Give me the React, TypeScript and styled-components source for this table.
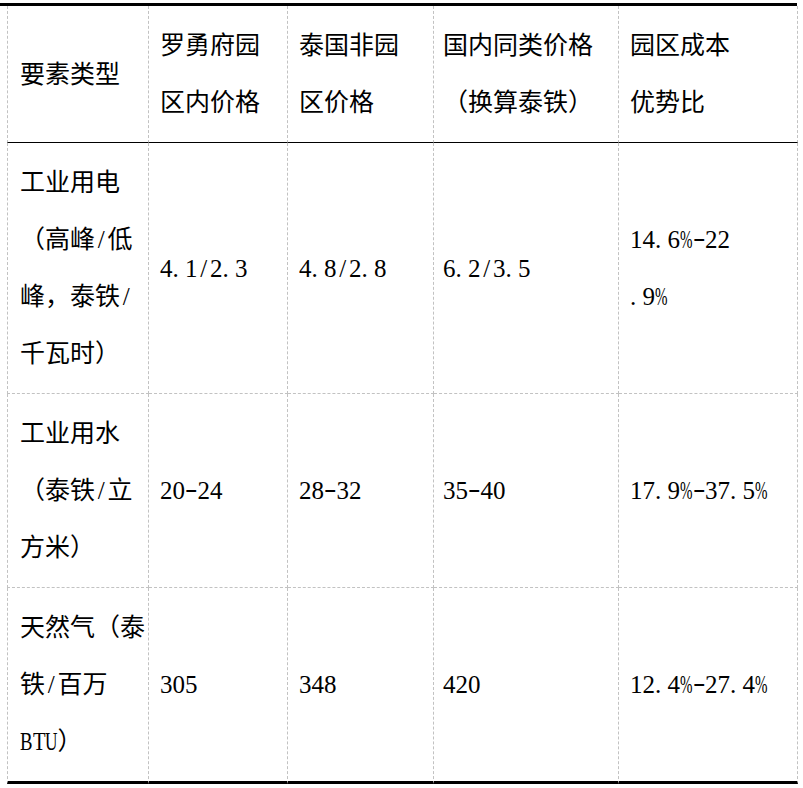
import React from "react";
import styled, { createGlobalStyle } from "styled-components";

const Global = createGlobalStyle`
  html, body { margin: 0; padding: 0; background: #fff; }
  body {
    font-family: "Liberation Serif", "Noto Sans CJK SC", serif;
    color: #000;
  }
`;

const Page = styled.div`
  padding-top: 3px;
  width: 803px;
`;

const TopRule = styled.div`
  width: 797px;
  height: 3px;
  background: #000;
`;

const Table = styled.table`
  margin-left: 7px;
  width: 791px;
  table-layout: fixed;
  border-collapse: separate;
  border-spacing: 0;
  font-family: "Liberation Serif", "Noto Sans CJK SC", serif;
  font-size: 25px;
  line-height: 57px;
  color: #000;
  text-spacing-trim: space-all;
  font-kerning: none;
`;

type Edge = "head" | "dash" | "end";

const Row = styled.tr<{ $edge: Edge }>`
  & > * {
    border-bottom: ${(p) =>
      p.$edge === "head"
        ? "1px solid #000"
        : p.$edge === "end"
        ? "3px solid #000"
        : "1px dashed #c2c2c2"};
  }
`;

const cellCss = `
  padding: 11px 8px 11px 11px;
  vertical-align: middle;
  text-align: left;
  font-weight: normal;
  border-right: 1px dashed #c2c2c2;
  &:first-child { border-left: 1px dashed #c2c2c2; padding-left: 12px; }
  &:nth-child(4) { padding-left: 9px; }
`;

const Head = styled.th`${cellCss}`;
const Cell = styled.td`${cellCss}`;

const Line = styled.span`
  display: block;
  white-space: nowrap;
`;

const Half = styled.span<{ $scale: number; $align: string; $lift: number }>`
  display: inline-block;
  width: 0.5em;
  white-space: nowrap;
  text-align: ${(p) => p.$align};
  transform: translateY(${(p) => -p.$lift}px) scaleX(${(p) => p.$scale});
  transform-origin: left center;
`;

const SCALE: Record<string, number> = { "%": 0.6, B: 0.75, T: 0.82, U: 0.69, "-": 1.5 };

function Txt({ s }: { s: string }) {
  const parts: React.ReactNode[] = [];
  let buf = "";
  Array.from(s).forEach((ch, i) => {
    if (/[.\/%\-A-Za-z]/.test(ch)) {
      if (buf) {
        parts.push(buf);
        buf = "";
      }
      const sc = SCALE[ch] ?? 1;
      parts.push(
        <Half
          key={i}
          $scale={sc}
          $align={ch === "/" ? "center" : "left"}
          $lift={ch === "-" ? 2 : 0}
        >
          {ch}
        </Half>
      );
    } else buf += ch;
  });
  if (buf) parts.push(buf);
  return <>{parts}</>;
}

const WIDTHS = [142, 139, 146, 185, 179];

const header: string[][] = [
  ["要素类型"],
  ["罗勇府园", "区内价格"],
  ["泰国非园", "区价格"],
  ["国内同类价格", "（换算泰铁）"],
  ["园区成本", "优势比"],
];

const rows: string[][][] = [
  [["工业用电", "（高峰/低", "峰，泰铁/", "千瓦时）"], ["4.1/2.3"], ["4.8/2.8"], ["6.2/3.5"], ["14.6%-22", ".9%"]],
  [["工业用水", "（泰铁/立", "方米）"], ["20-24"], ["28-32"], ["35-40"], ["17.9%-37.5%"]],
  [["天然气（泰", "铁/百万", "BTU）"], ["305"], ["348"], ["420"], ["12.4%-27.4%"]],
];

function Lines({ lines }: { lines: string[] }) {
  return (
    <>
      {lines.map((l, i) => (
        <Line key={i}>
          <Txt s={l} />
        </Line>
      ))}
    </>
  );
}

export default function App() {
  return (
    <>
      <Global />
      <Page>
        <TopRule />
        <Table>
          <colgroup>
            {WIDTHS.map((w, i) => (
              <col key={i} style={{ width: w }} />
            ))}
          </colgroup>
          <thead>
            <Row $edge="head">
              {header.map((c, i) => (
                <Head key={i}>
                  <Lines lines={c} />
                </Head>
              ))}
            </Row>
          </thead>
          <tbody>
            {rows.map((r, ri) => (
              <Row key={ri} $edge={ri === rows.length - 1 ? "end" : "dash"}>
                {r.map((c, ci) => (
                  <Cell key={ci}>
                    <Lines lines={c} />
                  </Cell>
                ))}
              </Row>
            ))}
          </tbody>
        </Table>
      </Page>
    </>
  );
}
